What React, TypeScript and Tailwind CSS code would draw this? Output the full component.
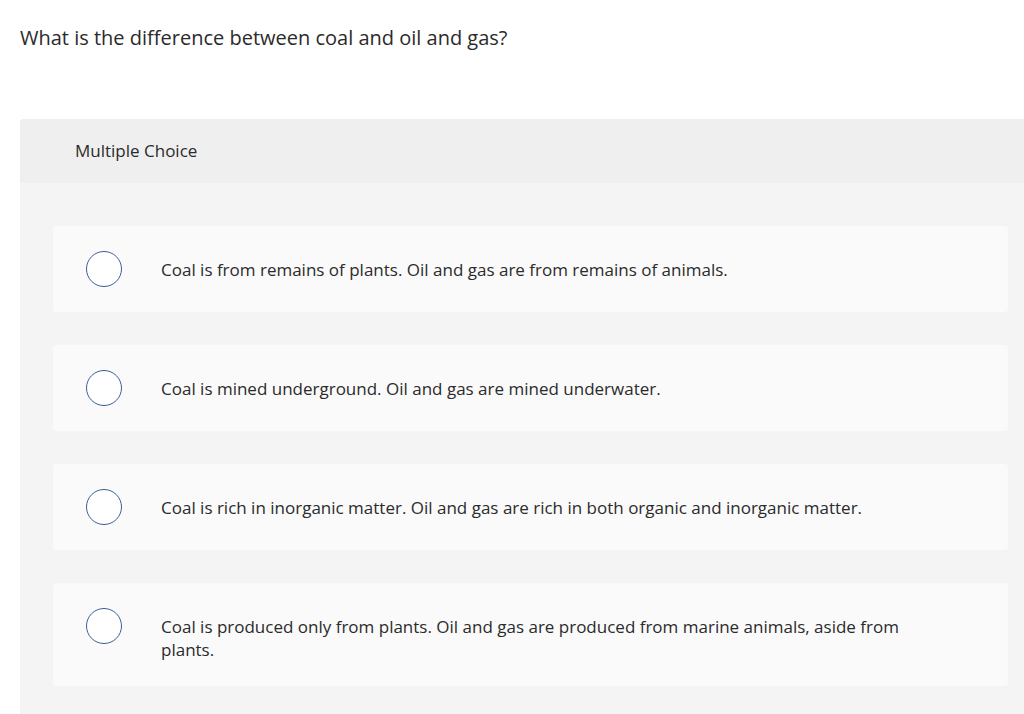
import React from "react";

const options = [
  "Coal is from remains of plants. Oil and gas are from remains of animals.",
  "Coal is mined underground. Oil and gas are mined underwater.",
  "Coal is rich in inorganic matter. Oil and gas are rich in both organic and inorganic matter.",
  "Coal is produced only from plants. Oil and gas are produced from marine animals, aside from plants.",
];

export default function App() {
  return (
    <div
      className="w-[1024px] h-[714px] overflow-hidden bg-white text-[#2b2b2b]"
      style={{ fontFamily: "'Open Sans', sans-serif" }}
    >
      <div className="pl-[20px] pt-[25px] text-[20px] leading-[26px]">
        What is the difference between coal and oil and gas?
      </div>
      <div className="ml-[20px] mt-[68px] rounded-tl-[4px] overflow-hidden bg-[#f4f4f4] pb-[40px]">
        <div className="h-[64px] bg-[#efefef] flex items-center pl-[55px] text-[17px]">
          Multiple Choice
        </div>
        <div className="pt-[43px] pl-[33px] pr-[16px] flex flex-col gap-[33px]">
          {options.map((o, i) => (
            <div key={i} className="bg-[#fafafa] rounded-[4px] py-[25px] pl-[33px] flex items-start">
              <div className="w-[36px] h-[36px] rounded-full border-[1.5px] border-[#3a5f96] bg-white shrink-0" />
              <div className="ml-[39px] mt-[7px] w-[760px] text-[17px] leading-[23px]">{o}</div>
            </div>
          ))}
        </div>
      </div>
    </div>
  );
}
